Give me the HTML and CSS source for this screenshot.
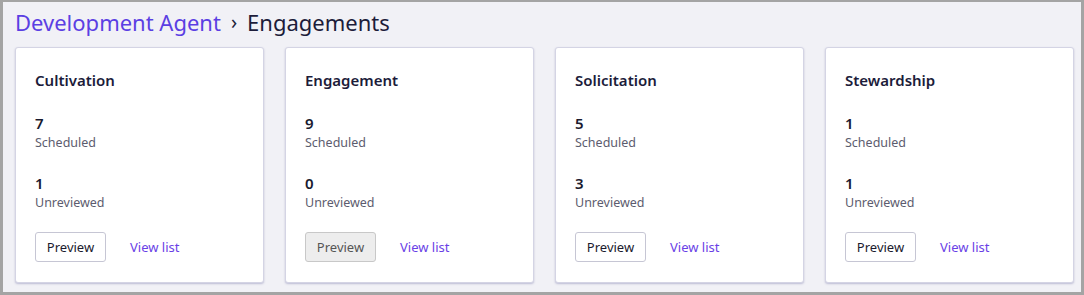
FILE: index.html
```html
<!DOCTYPE html>
<html lang="en">
<head>
  <meta charset="UTF-8">
  <title>Engagements</title>
  <link rel="stylesheet" href="styles.css">
</head>
<body>

<div class="frame">
  <div class="breadcrumb">
    <a href="#" class="crumb-link">Development Agent</a>
    <span class="crumb-sep">&#8250;</span>
    <span class="crumb-current">Engagements</span>
  </div>

  <div class="cards">
    <div class="card">
      <h3>Cultivation</h3>
      <div class="stat"><strong>7</strong><span>Scheduled</span></div>
      <div class="stat"><strong>1</strong><span>Unreviewed</span></div>
      <div class="actions">
        <button class="preview-btn">Preview</button>
        <a href="#" class="view-link">View list</a>
      </div>
    </div>

    <div class="card">
      <h3>Engagement</h3>
      <div class="stat"><strong>9</strong><span>Scheduled</span></div>
      <div class="stat"><strong>0</strong><span>Unreviewed</span></div>
      <div class="actions">
        <button class="preview-btn" disabled>Preview</button>
        <a href="#" class="view-link">View list</a>
      </div>
    </div>

    <div class="card">
      <h3>Solicitation</h3>
      <div class="stat"><strong>5</strong><span>Scheduled</span></div>
      <div class="stat"><strong>3</strong><span>Unreviewed</span></div>
      <div class="actions">
        <button class="preview-btn">Preview</button>
        <a href="#" class="view-link">View list</a>
      </div>
    </div>

    <div class="card">
      <h3>Stewardship</h3>
      <div class="stat"><strong>1</strong><span>Scheduled</span></div>
      <div class="stat"><strong>1</strong><span>Unreviewed</span></div>
      <div class="actions">
        <button class="preview-btn">Preview</button>
        <a href="#" class="view-link">View list</a>
      </div>
    </div>
  </div>
</div>

</body>
</html>
```

FILE: styles.css
```css
html, body {
  margin: 0;
  height: 100%;
}
body {
  font-family: "Noto Sans", sans-serif;
  background: #a4a4a4;
}
.frame {
  box-sizing: border-box;
  margin: 2px 3px 0 3px;
  height: calc(100% - 5px);
  background: #f1f1f6;
  padding: 6px 7px 0 12px;
}
.breadcrumb {
  display: flex;
  align-items: center;
  height: 27px;
  font-size: 22px;
}
.crumb-link {
  color: #5b3fe3;
  text-decoration: none;
}
.crumb-sep {
  margin: 0 10px 0 10px;
  color: #22223a;
  font-size: 20px;
}
.crumb-current {
  color: #1c1c3a;
}
.cards {
  display: grid;
  grid-template-columns: repeat(4, 1fr);
  gap: 21px;
  margin-top: 12px;
}
.card {
  background: #fff;
  border: 1px solid #d4d4e4;
  border-radius: 3px;
  box-shadow: 0 1px 2px rgba(90, 90, 150, 0.35);
  padding: 20px 19px 19px 19px;
  height: 236px;
  box-sizing: border-box;
}
.card h3 {
  margin: 0;
  font-size: 15px;
  font-weight: 600;
  color: #1c1c3a;
  line-height: 24px;
}
.stat {
  margin-top: 21px;
}
.stat strong {
  display: block;
  font-size: 15px;
  font-weight: 600;
  color: #1a1a2e;
  line-height: 20px;
}
.stat span {
  display: block;
  font-size: 12.5px;
  color: #5c5c6e;
  line-height: 19px;
}
.actions {
  display: flex;
  align-items: center;
  gap: 24px;
  margin-top: 20px;
}
.preview-btn {
  font-family: inherit;
  font-size: 13px;
  color: #1a1a2e;
  background: #fff;
  border: 1px solid #c6c6d4;
  border-radius: 3px;
  width: 71px;
  height: 30px;
  padding: 0;
}
.preview-btn:disabled {
  background: #ededed;
  color: #555;
  border-color: #c8c8c8;
}
.view-link {
  font-size: 13px;
  color: #6a3fe6;
  text-decoration: none;
}
```
